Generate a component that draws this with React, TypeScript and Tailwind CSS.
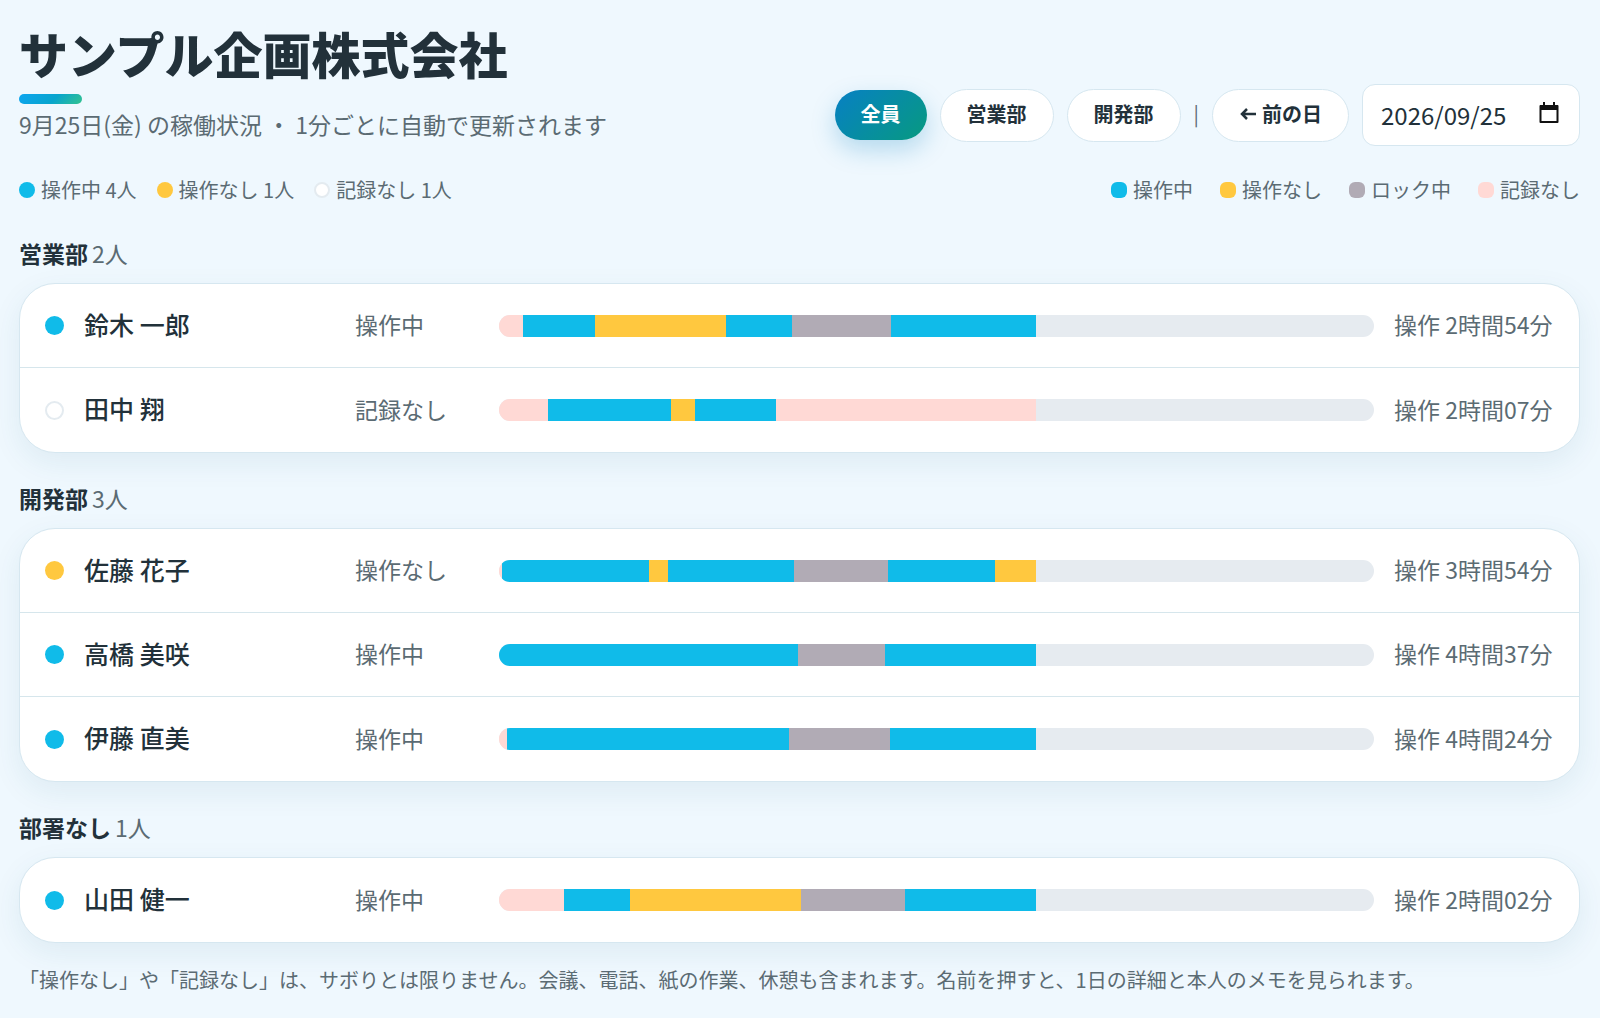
import React from "react";

type Kind = "active" | "idle" | "lock" | "none";

type Member = {
  name: string;
  status: string;
  dot: Kind;
  total: string;
  // [kind, width] along a day that is DAY units long
  segments: [Kind, number][];
};

const DAY = 875;

const fill: Record<Kind, string> = {
  active: "bg-[#10bbe9]",
  idle: "bg-[#ffc83f]",
  lock: "bg-[#b1abb5]",
  none: "bg-[#ffd9d5]",
};

const dotFill: Record<Kind, string> = {
  active: "bg-[#10bbe9]",
  idle: "bg-[#ffc83f]",
  lock: "bg-[#b1abb5]",
  none: "bg-white border-2 border-[#e4ebf0]",
};

const departments: { title: string; members: Member[] }[] = [
  {
    title: "営業部",
    members: [
      {
        name: "鈴木 一郎",
        status: "操作中",
        dot: "active",
        total: "操作 2時間54分",
        segments: [["none", 24], ["active", 72], ["idle", 131], ["active", 66], ["lock", 99], ["active", 145]],
      },
      {
        name: "田中 翔",
        status: "記録なし",
        dot: "none",
        total: "操作 2時間07分",
        segments: [["none", 49], ["active", 123], ["idle", 24], ["active", 81], ["none", 260]],
      },
    ],
  },
  {
    title: "開発部",
    members: [
      {
        name: "佐藤 花子",
        status: "操作なし",
        dot: "idle",
        total: "操作 3時間54分",
        segments: [["none", 3], ["active", 147], ["idle", 19], ["active", 126], ["lock", 94], ["active", 107], ["idle", 41]],
      },
      {
        name: "高橋 美咲",
        status: "操作中",
        dot: "active",
        total: "操作 4時間37分",
        segments: [["active", 299], ["lock", 87], ["active", 151]],
      },
      {
        name: "伊藤 直美",
        status: "操作中",
        dot: "active",
        total: "操作 4時間24分",
        segments: [["none", 8], ["active", 282], ["lock", 101], ["active", 146]],
      },
    ],
  },
  {
    title: "部署なし",
    members: [
      {
        name: "山田 健一",
        status: "操作中",
        dot: "active",
        total: "操作 2時間02分",
        segments: [["none", 65], ["active", 66], ["idle", 171], ["lock", 104], ["active", 131]],
      },
    ],
  },
];

const counts: { kind: Kind; label: string }[] = [
  { kind: "active", label: "操作中 4人" },
  { kind: "idle", label: "操作なし 1人" },
  { kind: "none", label: "記録なし 1人" },
];

const legend: { kind: Kind; label: string }[] = [
  { kind: "active", label: "操作中" },
  { kind: "idle", label: "操作なし" },
  { kind: "lock", label: "ロック中" },
  { kind: "none", label: "記録なし" },
];

const pill =
  "flex h-[53px] items-center rounded-full border border-[#d6e7f0] bg-white px-[26px] pb-[2px] text-[20px] font-bold text-[#22313a] cursor-pointer";

function Header() {
  return (
    <header className="flex items-end justify-between">
      <div>
        <h1 className="text-[49px] leading-[70px] font-black">サンプル企画株式会社</h1>
        <div className="mt-[6px] h-[10px] w-[63px] rounded-full bg-[linear-gradient(135deg,#0ea5f0,#08a5cd_55%,#34c38f)]" />
        <p className="pb-[2px] text-[23px] leading-[40px] text-[#5b6b73]">
          9月25日(金) の稼働状況 ・ 1分ごとに自動で更新されます
        </p>
      </div>
      <div className="flex items-center gap-[13px]">
        <button className="flex h-[50px] items-center rounded-full bg-[linear-gradient(135deg,#0780c4,#079a80)] px-[26px] pb-[2px] text-[20px] font-bold text-white shadow-[0_10px_24px_rgba(7,128,190,0.25)] cursor-pointer">
          全員
        </button>
        <button className={pill}>営業部</button>
        <button className={pill}>開発部</button>
        <span className="pb-[2px] text-[20px] text-[#5b6b73]">|</span>
        <button className={pill}>
          <svg width="18" height="18" viewBox="0 0 18 18" fill="none" stroke="currentColor" strokeWidth="2.5" className="mr-[5px]">
            <path d="M17 9H3M8 4L3 9l5 5" />
          </svg>
          前の日
        </button>
        <label className="flex h-[62px] w-[218px] items-center justify-between rounded-[13px] border border-[#d6e7f0] bg-white pr-5 pl-[18px]">
          <input
            type="text"
            aria-label="日付"
            defaultValue="2026/09/25"
            className="w-[140px] bg-transparent text-[24px] outline-none"
          />
          <svg width="20" height="22" viewBox="0 0 20 22" fill="none" stroke="#111" className="mb-1">
            <path d="M1.500 4h17v16h-17z" strokeWidth="2" strokeLinejoin="round" />
            <path d="M1 5.500h18" strokeWidth="5" />
            <path d="M5 0v4M15 0v4" strokeWidth="2" />
          </svg>
        </label>
      </div>
    </header>
  );
}

function Legends() {
  return (
    <div className="flex items-center justify-between pt-px pb-[4px] text-[20px] leading-[28px] text-[#5b6b73]">
      <ul className="flex gap-5">
        {counts.map((c) => (
          <li key={c.label} className="flex items-center gap-[6px]">
            <span className={`size-4 rounded-full ${dotFill[c.kind]}`} />
            {c.label}
          </li>
        ))}
      </ul>
      <ul className="flex gap-[27px]">
        {legend.map((l) => (
          <li key={l.label} className="flex items-center gap-[6px]">
            <span className={`size-4 rounded-[6px] ${fill[l.kind]}`} />
            {l.label}
          </li>
        ))}
      </ul>
    </div>
  );
}

function MemberRow({ member }: { member: Member }) {
  return (
    <li className="grid h-[84px] grid-cols-[19px_251px_124px_1fr_160px] items-center gap-5 px-[25px] text-[23px] text-[#5b6b73]">
      <span className={`size-[19px] rounded-full ${dotFill[member.dot]}`} />
      <a href="#" className="pb-[2px] text-[25px] font-medium text-[#22313a]">
        {member.name}
      </a>
      <span className="pb-[2px]">{member.status}</span>
      <div className="flex h-[22px] overflow-hidden rounded-full bg-[#e6ebf0]">
        {member.segments.map(([kind, width], i) => (
          <div key={i} className={fill[kind]} style={{ width: `${(width / DAY) * 100}%` }} />
        ))}
      </div>
      <span className="pb-[2px] whitespace-nowrap">{member.total}</span>
    </li>
  );
}

function App() {
  return (
    <main className="flex min-h-screen flex-col gap-[29px] bg-[#eff8fe] pt-[18px] pr-5 pl-[19px] font-['Noto_Sans_CJK_JP',sans-serif] text-[#22313a]">
      <Header />
      <Legends />
      {departments.map((d) => (
        <section key={d.title}>
          <h2 className="mb-[14px] text-[23px] leading-[32px] font-bold">
            {d.title}
            <span className="ml-1 font-normal text-[#5b6b73]">{d.members.length}人</span>
          </h2>
          <ul className="divide-y divide-[#d6e6ec] rounded-[36px] border border-[#d6e7f0] bg-white shadow-[0_10px_30px_rgba(20,90,120,0.08)]">
            {d.members.map((m) => (
              <MemberRow key={m.name} member={m} />
            ))}
          </ul>
        </section>
      ))}
      <p className="-mt-2 text-[20px] leading-[32px] text-[#5b6b73]">
        「操作なし」や「記録なし」は、サボりとは限りません。会議、電話、紙の作業、休憩も含まれます。名前を押すと、1日の詳細と本人のメモを見られます。
      </p>
    </main>
  );
}

export default App;
